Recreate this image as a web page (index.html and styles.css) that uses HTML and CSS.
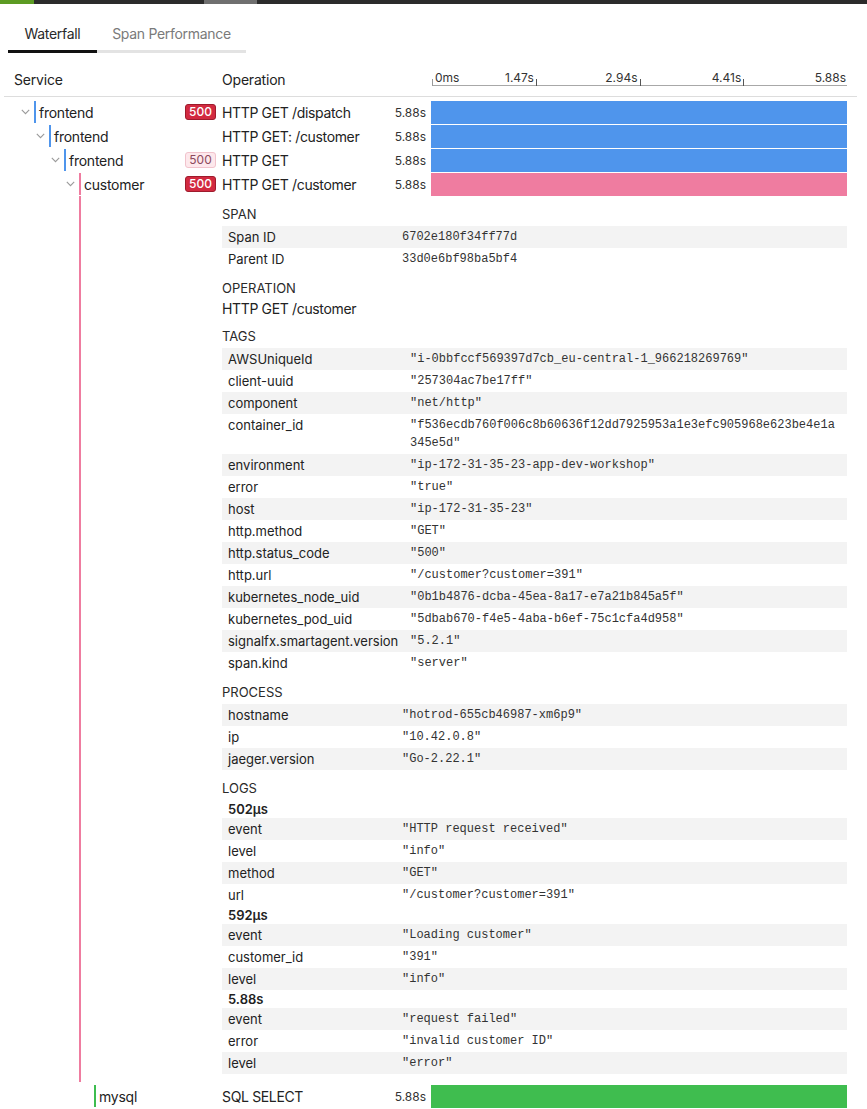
FILE: index.html
```html
<!DOCTYPE html>
<html>
<head>
<meta charset="utf-8">
<title>Trace</title>
<link rel="stylesheet" href="styles.css">
</head>
<body>
<div class="topbar"><span class="seg seg-green"></span><span class="seg seg-dark1"></span><span class="seg seg-gray"></span><span class="seg seg-dark2"></span></div>

<div class="tabs">
  <div class="tab tab-active">Waterfall</div>
  <div class="tab tab-perf">Span Performance</div>
</div>

<div class="header">
  <div class="h-service">Service</div>
  <div class="h-op">Operation</div>
  <div class="axis-cell">
    <div class="axis">
      <div class="axis-line"></div>
      <span class="tick tick-0"></span>
      <span class="tick tick-1"></span>
      <span class="tick tick-2"></span>
      <span class="tick tick-3"></span>
      <span class="lbl lbl-0">0ms</span>
      <span class="lbl lbl-1">1.47s</span>
      <span class="lbl lbl-2">2.94s</span>
      <span class="lbl lbl-3">4.41s</span>
      <span class="lbl lbl-4">5.88s</span>
    </div>
  </div>
</div>

<div class="rows">
  <div class="row">
    <div class="svc depth-0"><span class="chev"><svg width="9" height="6" viewBox="0 0 9 6"><polyline points="0.8,0.8 4.5,4.6 8.2,0.8" fill="none" stroke="#9a9a9a" stroke-width="1.1"/></svg></span><span class="svc-line line-blue"></span><span class="svc-name">frontend</span></div>
    <div class="badge-cell"><span class="badge badge-err">500</span></div>
    <div class="op">HTTP GET /dispatch</div>
    <div class="dur">5.88s</div>
    <div class="bar-cell"><div class="bar bar-blue"></div></div>
  </div>
  <div class="row">
    <div class="svc depth-1"><span class="chev"><svg width="9" height="6" viewBox="0 0 9 6"><polyline points="0.8,0.8 4.5,4.6 8.2,0.8" fill="none" stroke="#9a9a9a" stroke-width="1.1"/></svg></span><span class="svc-line line-blue"></span><span class="svc-name">frontend</span></div>
    <div class="badge-cell"></div>
    <div class="op">HTTP GET: /customer</div>
    <div class="dur">5.88s</div>
    <div class="bar-cell"><div class="bar bar-blue"></div></div>
  </div>
  <div class="row">
    <div class="svc depth-2"><span class="chev"><svg width="9" height="6" viewBox="0 0 9 6"><polyline points="0.8,0.8 4.5,4.6 8.2,0.8" fill="none" stroke="#9a9a9a" stroke-width="1.1"/></svg></span><span class="svc-line line-blue"></span><span class="svc-name">frontend</span></div>
    <div class="badge-cell"><span class="badge badge-soft">500</span></div>
    <div class="op">HTTP GET</div>
    <div class="dur">5.88s</div>
    <div class="bar-cell"><div class="bar bar-blue"></div></div>
  </div>
  <div class="row">
    <div class="svc depth-3"><span class="chev"><svg width="9" height="6" viewBox="0 0 9 6"><polyline points="0.8,0.8 4.5,4.6 8.2,0.8" fill="none" stroke="#9a9a9a" stroke-width="1.1"/></svg></span><span class="svc-line line-pink"></span><span class="svc-name">customer</span></div>
    <div class="badge-cell"><span class="badge badge-err">500</span></div>
    <div class="op">HTTP GET /customer</div>
    <div class="dur">5.88s</div>
    <div class="bar-cell"><div class="bar bar-pink"></div></div>
  </div>

  <div class="detail">
    <div class="gutter"><div class="gline"></div></div>
    <div class="detail-body">
      <div class="sec-h">SPAN</div>
      <div class="kv">
        <div class="kv-row"><div class="k">Span ID</div><div class="v">6702e180f34ff77d</div></div>
        <div class="kv-row"><div class="k">Parent ID</div><div class="v">33d0e6bf98ba5bf4</div></div>
      </div>

      <div class="sec-h">OPERATION</div>
      <div class="sec-v">HTTP GET /customer</div>

      <div class="sec-h">TAGS</div>
      <div class="kv kv-tags">
        <div class="kv-row"><div class="k">AWSUniqueId</div><div class="v">"i-0bbfccf569397d7cb_eu-central-1_966218269769"</div></div>
        <div class="kv-row"><div class="k">client-uuid</div><div class="v">"257304ac7be17ff"</div></div>
        <div class="kv-row"><div class="k">component</div><div class="v">"net/http"</div></div>
        <div class="kv-row"><div class="k">container_id</div><div class="v">"f536ecdb760f006c8b60636f12dd7925953a1e3efc905968e623be4e1a345e5d"</div></div>
        <div class="kv-row"><div class="k">environment</div><div class="v">"ip-172-31-35-23-app-dev-workshop"</div></div>
        <div class="kv-row"><div class="k">error</div><div class="v">"true"</div></div>
        <div class="kv-row"><div class="k">host</div><div class="v">"ip-172-31-35-23"</div></div>
        <div class="kv-row"><div class="k">http.method</div><div class="v">"GET"</div></div>
        <div class="kv-row"><div class="k">http.status_code</div><div class="v">"500"</div></div>
        <div class="kv-row"><div class="k">http.url</div><div class="v">"/customer?customer=391"</div></div>
        <div class="kv-row"><div class="k">kubernetes_node_uid</div><div class="v">"0b1b4876-dcba-45ea-8a17-e7a21b845a5f"</div></div>
        <div class="kv-row"><div class="k">kubernetes_pod_uid</div><div class="v">"5dbab670-f4e5-4aba-b6ef-75c1cfa4d958"</div></div>
        <div class="kv-row"><div class="k">signalfx.smartagent.version</div><div class="v">"5.2.1"</div></div>
        <div class="kv-row"><div class="k">span.kind</div><div class="v">"server"</div></div>
      </div>

      <div class="sec-h">PROCESS</div>
      <div class="kv">
        <div class="kv-row"><div class="k">hostname</div><div class="v">"hotrod-655cb46987-xm6p9"</div></div>
        <div class="kv-row"><div class="k">ip</div><div class="v">"10.42.0.8"</div></div>
        <div class="kv-row"><div class="k">jaeger.version</div><div class="v">"Go-2.22.1"</div></div>
      </div>

      <div class="sec-h">LOGS</div>
      <div class="log-h">502µs</div>
      <div class="kv">
        <div class="kv-row"><div class="k">event</div><div class="v">"HTTP request received"</div></div>
        <div class="kv-row"><div class="k">level</div><div class="v">"info"</div></div>
        <div class="kv-row"><div class="k">method</div><div class="v">"GET"</div></div>
        <div class="kv-row"><div class="k">url</div><div class="v">"/customer?customer=391"</div></div>
      </div>
      <div class="log-h">592µs</div>
      <div class="kv">
        <div class="kv-row"><div class="k">event</div><div class="v">"Loading customer"</div></div>
        <div class="kv-row"><div class="k">customer_id</div><div class="v">"391"</div></div>
        <div class="kv-row"><div class="k">level</div><div class="v">"info"</div></div>
      </div>
      <div class="log-h">5.88s</div>
      <div class="kv">
        <div class="kv-row"><div class="k">event</div><div class="v">"request failed"</div></div>
        <div class="kv-row"><div class="k">error</div><div class="v">"invalid customer ID"</div></div>
        <div class="kv-row"><div class="k">level</div><div class="v">"error"</div></div>
      </div>
    </div>
  </div>

  <div class="row">
    <div class="svc depth-4"><span class="chev"></span><span class="svc-line line-green"></span><span class="svc-name">mysql</span></div>
    <div class="badge-cell"></div>
    <div class="op">SQL SELECT</div>
    <div class="dur">5.88s</div>
    <div class="bar-cell"><div class="bar bar-green"></div></div>
  </div>
</div>
</body>
</html>
```

FILE: styles.css
```css
html, body {
  margin: 0;
  padding: 0;
  background: #ffffff;
}
body {
  font-family: Inter, "Noto Sans", "Liberation Sans", sans-serif;
  color: #222222;
  font-size: 14px;
  width: 867px;
  overflow: hidden;
}

/* top bar */
.topbar {
  display: flex;
  height: 4px;
}
.seg { display: block; height: 4px; }
.seg-green { width: 34px; background: #5c9b23; }
.seg-dark1 { width: 170px; background: #2b2b2b; }
.seg-gray { width: 53px; background: #6f6f6f; }
.seg-dark2 { flex: 1; background: #2b2b2b; }

/* tabs */
.tabs {
  display: flex;
  margin: 16px 0 0 8px;
}
.tab {
  box-sizing: border-box;
  text-align: center;
  padding: 4px 0 6px;
  line-height: 20px;
  font-size: 14px;
  letter-spacing: -0.3px;
  color: #7a7a7a;
  border-bottom: 3px solid #e3e3e3;
}
.tab-active {
  width: 89px;
  color: #2a2a2a;
  border-bottom-color: #111111;
}
.tab-perf { width: 149px; }

/* header */
.header {
  display: grid;
  grid-template-columns: 218px 204px 421px;
  height: 44px;
  margin: 0 10px 0 4px;
  border-bottom: 1px solid #dddddd;
  box-sizing: border-box;
}
.h-service {
  padding: 17px 0 0 10px;
  line-height: 20px;
  font-size: 14px;
  letter-spacing: -0.2px;
  color: #222;
}
.h-op {
  padding: 17px 0 0 0;
  line-height: 20px;
  font-size: 14px;
  letter-spacing: -0.2px;
  color: #222;
}
.axis-cell {
  padding-left: 6px;
}
.axis {
  position: relative;
  width: 415px;
  height: 43px;
}
.axis-line {
  position: absolute;
  left: 0;
  right: 0;
  top: 32px;
  height: 1px;
  background: #a8a8a8;
}
.tick {
  position: absolute;
  top: 26px;
  width: 1px;
  height: 7px;
  background: #555555;
}
.tick-0 { left: 0; background: #9a9a9a; }
.tick-1 { left: 25%; }
.tick-2 { left: 50%; }
.tick-3 { left: 75%; }
.lbl {
  position: absolute;
  top: 17px;
  line-height: 16px;
  font-size: 12px;
  color: #333;
}
.lbl-0 { left: 3px; }
.lbl-1 { right: 75%; margin-right: 2px; }
.lbl-2 { right: 50%; margin-right: 2px; }
.lbl-3 { right: 25%; margin-right: 2px; }
.lbl-4 { right: 1px; }

/* rows */
.rows { padding-top: 3px; }
.row {
  display: grid;
  grid-template-columns: 185px 37px 164px 40px 421px;
  height: 24px;
  align-items: center;
}
.svc {
  display: flex;
  align-items: center;
  height: 24px;
  box-sizing: border-box;
}
.depth-0 { padding-left: 20px; }
.depth-1 { padding-left: 35px; }
.depth-2 { padding-left: 50px; }
.depth-3 { padding-left: 65px; }
.depth-4 { padding-left: 80px; }
.chev {
  width: 14px;
  flex: none;
  display: flex;
  align-items: center;
  padding-left: 1px;
  box-sizing: border-box;
}
.chev svg { display: block; }
.svc-line {
  width: 2px;
  height: 22px;
  flex: none;
}
.line-blue { background: #4f95ec; }
.line-pink { background: #ef7ca0; }
.line-green { background: #3dbd4f; }
.svc-name {
  padding-left: 3px;
  font-size: 14px;
  letter-spacing: -0.25px;
  color: #222;
  white-space: nowrap;
}
.badge-cell {
  display: flex;
  align-items: center;
}
.badge {
  box-sizing: border-box;
  width: 31px;
  height: 16px;
  border-radius: 3px;
  font-size: 12px;
  line-height: 14px;
  text-align: center;
  font-weight: 500;
}
.badge-err {
  background: #d22a40;
  border: 1px solid #9e1b2c;
  color: #ffffff;
}
.badge-soft {
  background: #fde8ec;
  border: 1px solid #f1c3cc;
  color: #8c4a5c;
  font-weight: 400;
}
.op {
  font-size: 14px;
  letter-spacing: -0.35px;
  color: #222;
  white-space: nowrap;
}
.dur {
  font-size: 12px;
  color: #333;
  text-align: right;
}
.bar-cell {
  padding-left: 5px;
  align-self: start;
  padding-top: 1px;
}
.bar {
  width: 416px;
  height: 23px;
}
.bar-blue { background: #4f95ec; }
.bar-pink { background: #ef7ca0; }
.bar-green { background: #3fbd4f; }

/* detail */
.detail {
  display: flex;
}
.gutter {
  width: 222px;
  flex: none;
  box-sizing: border-box;
  padding-left: 79px;
  padding-bottom: 2px;
  display: flex;
}
.gline {
  width: 2px;
  background: #ef7ca0;
}
.detail-body {
  width: 625px;
  padding-bottom: 10px;
}
.sec-h {
  margin-top: 7px;
  margin-bottom: 1px;
  line-height: 22px;
  font-size: 13px;
  color: #2a2a2a;
}
.sec-v {
  line-height: 18px;
  font-size: 14px;
  letter-spacing: -0.35px;
  color: #222;
}
.log-h {
  padding-left: 6px;
  line-height: 18px;
  font-size: 13px;
  font-weight: 600;
  color: #222;
}
.kv-row {
  display: grid;
  grid-template-columns: 180px 1fr;
}
.kv-tags .kv-row {
  grid-template-columns: 188px 1fr;
}
.kv-row:nth-child(odd) {
  background: #f3f3f3;
}
.k {
  padding: 2px 0 2px 6px;
  line-height: 18px;
  font-size: 13px;
  color: #222;
  white-space: nowrap;
}
.v {
  padding: 2px 8px 2px 0;
  line-height: 18px;
  font-family: "Liberation Mono", "DejaVu Sans Mono", monospace;
  font-size: 12px;
  color: #333;
  word-break: break-all;
}
```
